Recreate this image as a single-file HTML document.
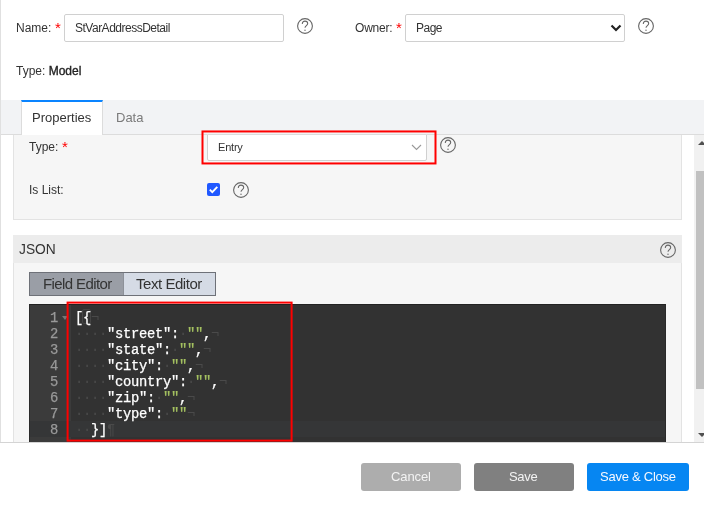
<!DOCTYPE html>
<html><head><meta charset="utf-8">
<style>
*{box-sizing:border-box;margin:0;padding:0}
html,body{width:704px;height:511px;overflow:hidden;background:#fff}
body{position:relative;font-family:"Liberation Sans",sans-serif;color:#333;font-size:12px}
.a{position:absolute}
.t{position:absolute;white-space:nowrap;line-height:1}
.req{position:absolute;color:#f00;font-size:13px;line-height:1}
.inp{position:absolute;background:#fff;border:1px solid #d0d0d0;border-radius:2px}
.hp{position:absolute;width:16px;height:16px}
.btn{position:absolute;top:463px;height:28px;width:100px;border-radius:3px}
.bt{position:absolute;white-space:nowrap;line-height:1;font-size:13px;color:#f3f3f3}
.mono i{font-style:normal;color:#4a4a4a;-webkit-text-stroke:0}
.mono s{text-decoration:none;color:#A5C261}
.mono{position:absolute;font-family:"Liberation Mono",monospace;font-size:13.8px;letter-spacing:-0.28px;-webkit-text-stroke:0.25px currentColor;line-height:16px;white-space:pre}
.clip{position:absolute;left:0;top:0;width:704px;height:511px;clip-path:inset(135px 0 69px 0)}
</style></head><body><div style="position:absolute;left:0;top:0;width:704px;height:511px;will-change:transform">
<svg width="0" height="0" style="position:absolute">
<defs>
<g id="help"><circle cx="8" cy="8" r="7.4" fill="none" stroke="#666" stroke-width="1.1"/><path d="M5.3 6.1C5.3 4.2 6.5 3.1 8 3.1C9.5 3.1 10.7 4.2 10.7 5.6C10.7 7.5 8 7.7 8 9.8" fill="none" stroke="#666" stroke-width="1.05"/><circle cx="8" cy="12.3" r="0.7" fill="#666"/></g>
</defs>
</svg>

<!-- left line -->
<div class="a" style="left:0;top:0;width:1px;height:442px;background:#e0e0e0"></div>

<!-- header -->
<div class="t" style="left:16px;top:22px;font-size:12px">Name:</div>
<div class="req" style="left:55px;top:20px;font-size:15px">*</div>
<div class="inp" style="left:64px;top:14px;width:220px;height:28px"></div>
<div class="t" style="left:75px;top:22px;font-size:12px;letter-spacing:-0.5px">StVarAddressDetail</div>
<svg class="hp" style="left:297px;top:18px" viewBox="0 0 16 16"><use href="#help"/></svg>

<div class="t" style="left:355px;top:22px;font-size:12px;letter-spacing:-0.2px">Owner:</div>
<div class="req" style="left:396px;top:20px;font-size:15px">*</div>
<div class="inp" style="left:405px;top:14px;width:220px;height:28px"></div>
<div class="t" style="left:416px;top:22px;font-size:12px;letter-spacing:-0.5px">Page</div>
<svg class="a" style="left:610px;top:24px;width:12px;height:8px" viewBox="0 0 12 8"><path d="M1.5 1.5L6 6L10.5 1.5" fill="none" stroke="#222" stroke-width="2.2"/></svg>
<svg class="hp" style="left:638px;top:18px" viewBox="0 0 16 16"><use href="#help"/></svg>

<div class="t" style="left:16px;top:65px;font-size:12px">Type: <b style="font-weight:normal;color:#222;-webkit-text-stroke:0.35px #222;letter-spacing:0px">Model</b></div>

<!-- tab band -->
<div class="a" style="left:1px;top:100px;width:703px;height:35px;background:#f2f3f5;border-bottom:1px solid #dcdcdc"></div>
<div class="a" style="left:21px;top:100px;width:82px;height:35px;background:#fff;border-top:2px solid #0a84ff;border-left:1px solid #dcdcdc;border-right:1px solid #dcdcdc"></div>
<div class="t" style="left:32px;top:111px;font-size:13px">Properties</div>
<div class="t" style="left:116px;top:111px;font-size:13px;color:#7a7a7a">Data</div>

<!-- scroll area -->
<div class="clip">
  <!-- panel 1 -->
  <div class="a" style="left:13px;top:120px;width:669px;height:100px;background:#f6f6f6;border:1px solid #e3e3e3"></div>
  <div class="t" style="left:29px;top:141px;font-size:12px">Type:</div>
  <div class="req" style="left:62px;top:139px;font-size:15px">*</div>
  <div class="a" style="left:207px;top:133px;width:220px;height:28px;background:#fff;border:1px solid #d0d0d0;border-radius:2px"></div>
  <div class="t" style="left:218px;top:142px;font-size:11px;letter-spacing:-0.2px">Entry</div>
  <svg class="a" style="left:411px;top:144px;width:11px;height:7px" viewBox="0 0 11 7"><path d="M1 1L5.5 5.5L10 1" fill="none" stroke="#999" stroke-width="1.1"/></svg>
  <svg class="hp" style="left:440px;top:137px" viewBox="0 0 16 16"><use href="#help"/></svg>
  <div class="t" style="left:29px;top:184px;font-size:12px">Is List:</div>
  <div class="a" style="left:207px;top:183px;width:13px;height:13px;background:#2058ff;border-radius:2px"></div>
  <svg class="a" style="left:207px;top:183px;width:13px;height:13px" viewBox="0 0 13 13"><path d="M2.8 6.6L5.3 9.1L10.3 3.9" fill="none" stroke="#fff" stroke-width="1.9"/></svg>
  <svg class="hp" style="left:233px;top:182px" viewBox="0 0 16 16"><use href="#help"/></svg>

  <!-- JSON panel -->
  <div class="a" style="left:13px;top:235px;width:669px;height:230px;background:#f6f6f6;border-left:1px solid #e3e3e3;border-right:1px solid #e3e3e3"></div>
  <div class="a" style="left:13px;top:235px;width:669px;height:28px;background:#ececec"></div>
  <div class="t" style="left:19px;top:241px;font-size:15px;transform:scaleX(0.92);transform-origin:0 0">JSON</div>
  <svg class="hp" style="left:660px;top:242px" viewBox="0 0 16 16"><use href="#help"/></svg>

  <div class="a" style="left:29px;top:272px;width:187px;height:24px;border:1px solid #6e7178;background:#d5dbe5"></div>
  <div class="a" style="left:30px;top:273px;width:94px;height:22px;background:#9a9ea6;border-right:1px solid #8d9199"></div>
  <div class="t" style="left:43px;top:276px;font-size:15px;color:#333;letter-spacing:-0.6px">Field Editor</div>
  <div class="t" style="left:136px;top:276px;font-size:15px;color:#333;letter-spacing:-0.45px">Text Editor</div>

  <!-- editor -->
  <div class="a" style="left:29px;top:304px;width:637px;height:150px;background:#323232;border-top:1px solid #222;border-left:1px solid #2a2a2a;border-right:1px solid #2a2a2a"></div>
  <div class="a" style="left:30px;top:305px;width:41px;height:150px;background:#3b3b3b"></div>
  <div class="a" style="left:30px;top:421px;width:41px;height:16px;background:#353637"></div>
  <div class="a" style="left:71px;top:421px;width:594px;height:16px;background:#353637"></div>
  <div class="mono" style="left:30px;top:311px;width:28px;text-align:right;color:#999">1
2
3
4
5
6
7
8</div>
  <div class="a" style="left:62px;top:316px;width:0;height:0;border-left:3px solid transparent;border-right:3px solid transparent;border-top:4px solid #777"></div>
  <div class="a" style="left:82px;top:309px;width:9px;height:15px;border:1px solid #454545;border-radius:2px"></div>
  <div class="mono" style="left:75px;top:311px;color:#fff">[{<i>&#172;</i>
<i>&#183;&#183;&#183;&#183;</i>"street":<i>&#183;</i><s>""</s>,<i>&#172;</i>
<i>&#183;&#183;&#183;&#183;</i>"state":<i>&#183;</i><s>""</s>,<i>&#172;</i>
<i>&#183;&#183;&#183;&#183;</i>"city":<i>&#183;</i><s>""</s>,<i>&#172;</i>
<i>&#183;&#183;&#183;&#183;</i>"country":<i>&#183;</i><s>""</s>,<i>&#172;</i>
<i>&#183;&#183;&#183;&#183;</i>"zip":<i>&#183;</i><s>""</s>,<i>&#172;</i>
<i>&#183;&#183;&#183;&#183;</i>"type":<i>&#183;</i><s>""</s><i>&#172;</i>
<i>&#183;&#183;</i>}]<i>&#182;</i></div>
</div>

<!-- red annotation boxes -->
<div class="a" style="left:201px;top:130px;width:235px;height:34px;border:2px solid #f00;transform:translate(0.5px,0.45px)"></div>
<div class="a" style="left:67px;top:302px;width:226px;height:140px;border:2px solid #f00;transform:translate(-0.4px,-0.4px)"></div>

<!-- scrollbar -->
<div class="a" style="left:694px;top:135px;width:10px;height:307px;background:#f1f1f1"></div>
<div class="a" style="left:696px;top:171px;width:8px;height:218px;background:#c1c1c1"></div>
<div class="a" style="left:698px;top:141px;width:0;height:0;border-left:4px solid transparent;border-right:4px solid transparent;border-bottom:4px solid #505050"></div>
<div class="a" style="left:698px;top:433px;width:0;height:0;border-left:4px solid transparent;border-right:4px solid transparent;border-top:4px solid #505050"></div>

<!-- footer -->
<div class="a" style="left:0;top:442px;width:704px;height:1px;background:#d4d4d4"></div>
<div class="btn" style="left:361px;background:#adadad"></div>
<div class="bt" style="left:391px;top:470px;letter-spacing:-0.1px">Cancel</div>
<div class="btn" style="left:474px;background:#808080"></div>
<div class="bt" style="left:509px;top:470px;letter-spacing:-0.3px">Save</div>
<div class="btn" style="left:587px;width:102px;background:#0686f2"></div>
<div class="bt" style="left:600px;top:470px;color:#f5f8ff;letter-spacing:-0.25px">Save &amp; Close</div>
</div></body></html>
